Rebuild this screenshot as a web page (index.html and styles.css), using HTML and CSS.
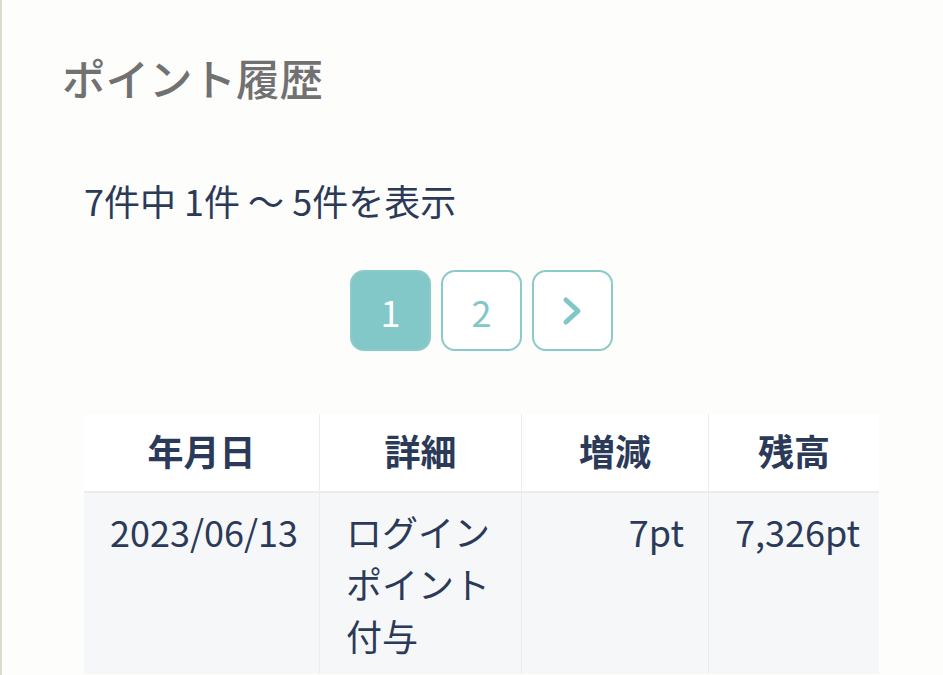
FILE: index.html
```html
<!DOCTYPE html>
<html lang="ja">
<head>
    <meta charset="UTF-8">
    <meta name="viewport" content="width=device-width, initial-scale=1.0">
    <title>ポイント履歴</title>
    <link rel="stylesheet" href="styles.css">
</head>
<body>
    <div class="page">
        <h1 class="page-title">ポイント履歴</h1>

        <div class="history">
            <p class="count">7件中 1件 〜 5件を表示</p>

            <nav class="pager">
                <a class="pager-item active">1</a>
                <a class="pager-item">2</a>
                <a class="pager-item">
                    <svg width="24" height="32" viewBox="0 0 24 32">
                        <path d="M5 5 L17 16 L5 27" fill="none" stroke="currentColor" stroke-width="5" stroke-linecap="round" stroke-linejoin="round"/>
                    </svg>
                </a>
            </nav>

            <table class="history-table">
                <thead>
                    <tr>
                        <th class="col-date">年月日</th>
                        <th class="col-detail">詳細</th>
                        <th class="col-diff">増減</th>
                        <th class="col-balance">残高</th>
                    </tr>
                </thead>
                <tbody>
                    <tr>
                        <td>2023/06/13</td>
                        <td>ログインポイント付与</td>
                        <td class="num">7pt</td>
                        <td>7,326pt</td>
                    </tr>
                </tbody>
            </table>
        </div>
    </div>
</body>
</html>
```

FILE: styles.css
```css
body {
    margin: 0;
    background-color: #fdfdfc;
    border-left: 2px solid #dcdacb;
    font-family: "Noto Sans CJK JP", "Noto Sans", sans-serif;
    color: #2b3a58;
    min-height: 675px;
    box-sizing: border-box;
}

.page {
    padding: 47px 64px 0 60px;
}

.page-title {
    margin: 0;
    font-size: 43.5px;
    font-weight: 500;
    color: #717171;
    line-height: 62px;
}

.history {
    padding-left: 22px;
}

.count {
    margin: 66px 0 0;
    font-size: 36px;
    line-height: 50px;
}

.pager {
    display: flex;
    justify-content: center;
    gap: 10px;
    margin-top: 45px;
}

.pager-item {
    width: 81px;
    height: 81px;
    box-sizing: border-box;
    border: 2px solid #8ccaca;
    border-radius: 14px;
    display: flex;
    align-items: center;
    justify-content: center;
    font-size: 36px;
    color: #82c6c6;
    background-color: #fff;
}

.pager-item.active {
    background-color: #82c8c9;
    color: #fff;
}

.history-table {
    width: 100%;
    margin-top: 63px;
    border-collapse: collapse;
    table-layout: fixed;
    font-size: 36px;
    line-height: 52px;
}

.history-table th {
    background-color: #fff;
    font-weight: 700;
    padding: 10px 10px 15px;
    border-left: 1px solid #ebecee;
    border-bottom: 2px solid #ebecee;
}

.history-table td {
    background-color: #f6f7f8;
    font-weight: 400;
    padding: 12px 24px 13px 26px;
    text-align: left;
    vertical-align: top;
    border-left: 1px solid #ebecee;
}

.history-table th:first-child,
.history-table td:first-child {
    border-left: none;
}

.history-table td.num {
    text-align: right;
}

/* widths are content widths, th padding adds 20px */
.col-date { width: 215px; }
.col-detail { width: 181px; }
.col-diff { width: 166px; }
```
